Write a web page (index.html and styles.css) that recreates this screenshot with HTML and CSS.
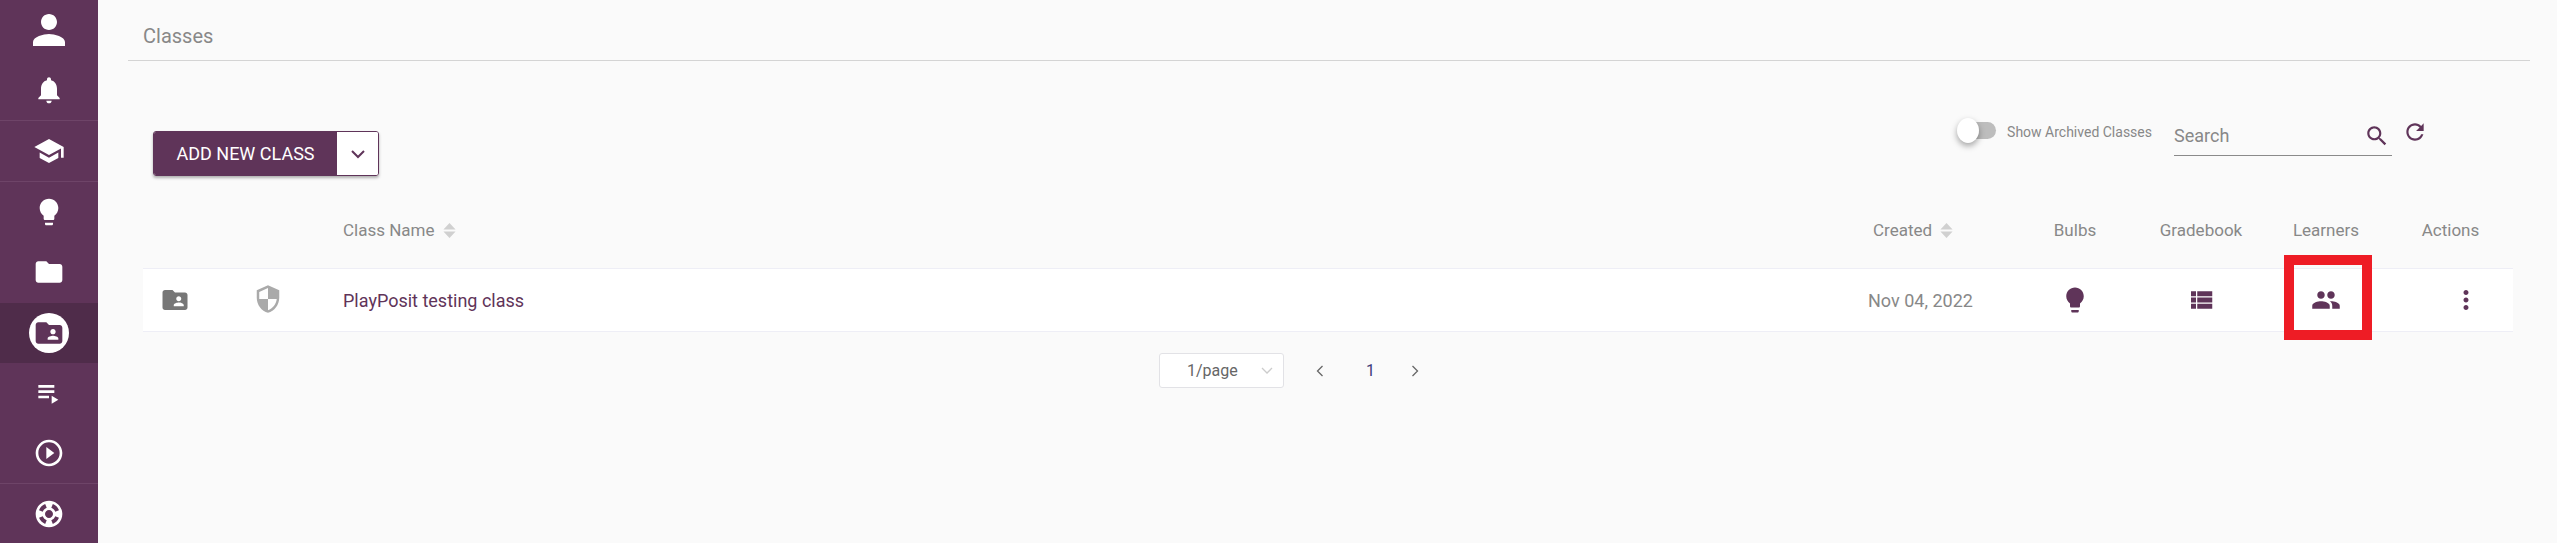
FILE: index.html
```html
<!DOCTYPE html>
<html>
	<head>
		<meta charset="utf-8" />
		<meta name="viewport" content="width=device-width, initial-scale=1.0" />
		<title>Classes</title>
		<link rel="stylesheet" href="styles.css">
	</head>
	<body class="app">
		<nav class="sidebar">
			<a class="side-item"><svg class="side-icon person-icon" viewBox="0 0 24 24"><path d="M12 12c2.21 0 4-1.79 4-4s-1.79-4-4-4-4 1.79-4 4 1.79 4 4 4zm0 2c-2.67 0-8 1.34-8 4v2h16v-2c0-2.66-5.33-4-8-4z"/></svg></a>
			<a class="side-item side-line"><svg class="side-icon" viewBox="0 0 24 24"><path d="M12 22c1.1 0 2-.9 2-2h-4c0 1.1.89 2 2 2zm6-6v-5c0-3.07-1.64-5.64-4.5-6.32V4c0-.83-.67-1.5-1.5-1.5s-1.5.67-1.5 1.5v.68C7.63 5.36 6 7.92 6 11v5l-2 2v1h16v-1l-2-2z"/></svg></a>
			<a class="side-item side-line"><svg class="side-icon" viewBox="0 0 24 24"><path d="M5 13.18v4L12 21l7-3.82v-4L12 17l-7-3.82zM12 3L1 9l11 6 9-4.91V17h2V9L12 3z"/></svg></a>
			<a class="side-item"><svg class="side-icon" viewBox="0 0 24 24"><path d="M9 21c0 .55.45 1 1 1h4c.55 0 1-.45 1-1v-1H9v1zm3-19C8.14 2 5 5.14 5 9c0 2.38 1.19 4.47 3 5.74V17c0 .55.45 1 1 1h6c.55 0 1-.45 1-1v-2.26c1.81-1.27 3-3.36 3-5.74 0-3.86-3.14-7-7-7z"/></svg></a>
			<a class="side-item"><svg class="side-icon" viewBox="0 0 24 24"><path d="M10 4H4c-1.1 0-1.99.9-1.99 2L2 18c0 1.1.9 2 2 2h16c1.1 0 2-.9 2-2V8c0-1.1-.9-2-2-2h-8l-2-2z"/></svg></a>
			<a class="side-item side-active"><span class="side-circle"><svg class="side-icon" viewBox="0 0 24 24"><path d="M20 6h-8l-2-2H4c-1.1 0-1.99.9-1.99 2L2 18c0 1.1.9 2 2 2h16c1.1 0 2-.9 2-2V8c0-1.1-.9-2-2-2zm-5 3c1.1 0 2 .9 2 2s-.9 2-2 2-2-.9-2-2 .9-2 2-2zm4 8h-8v-1c0-1.33 2.67-2 4-2s4 .67 4 2v1z"/></svg></span></a>
			<a class="side-item"><svg class="side-icon" viewBox="0 0 24 24"><path d="M4 10h12v2H4zm0-4h12v2H4zm0 8h8v2H4zm10 0v6l5-3z"/></svg></a>
			<a class="side-item side-line"><svg class="side-icon" viewBox="0 0 24 24"><path d="M10 16.5l6-4.5-6-4.5v9zM12 2C6.48 2 2 6.48 2 12s4.48 10 10 10 10-4.48 10-10S17.52 2 12 2zm0 18c-4.41 0-8-3.59-8-8s3.59-8 8-8 8 3.59 8 8-3.59 8-8 8z"/></svg></a>
			<a class="side-item"><svg class="side-icon" viewBox="0 0 24 24"><path d="M12 2C6.48 2 2 6.48 2 12s4.48 10 10 10 10-4.48 10-10S17.52 2 12 2zm7.46 7.12l-2.78 1.15c-.51-1.36-1.58-2.44-2.95-2.94l1.15-2.78c2.1.8 3.77 2.47 4.58 4.57zM12 15c-1.66 0-3-1.34-3-3s1.34-3 3-3 3 1.34 3 3-1.34 3-3 3zM9.13 4.54l1.17 2.78c-1.38.5-2.47 1.59-2.98 2.97L4.54 9.13c.81-2.11 2.48-3.78 4.59-4.59zM4.54 14.87l2.78-1.15c.51 1.38 1.59 2.46 2.97 2.96l-1.17 2.78c-2.1-.81-3.77-2.48-4.58-4.59zm10.34 4.59l-1.15-2.78c1.37-.51 2.45-1.59 2.95-2.97l2.78 1.17c-.81 2.1-2.48 3.77-4.58 4.58z"/></svg></a>
		</nav>
		<main class="content">
			<header class="page-title">Classes</header>

			<section class="toolbar">
				<div class="split-btn">
					<button type="button" class="split-main">ADD NEW CLASS</button>
					<button type="button" class="split-drop"><svg class="chev" viewBox="0 0 16 10"><path d="M2 2l6 6 6-6"/></svg></button>
				</div>
				<div class="tools">
					<div class="toggle"><span class="toggle-track"></span><span class="toggle-knob"></span></div>
					<span class="toggle-label">Show Archived Classes</span>
					<div class="search">
						<span class="search-text">Search</span>
						<svg class="search-icon" viewBox="0 0 24 24"><path d="M15.5 14h-.79l-.28-.27C15.41 12.59 16 11.11 16 9.5 16 5.91 13.09 3 9.5 3S3 5.91 3 9.5 5.91 16 9.5 16c1.61 0 3.09-.59 4.23-1.57l.27.28v.79l5 4.99L20.49 19l-4.99-5zm-6 0C7.01 14 5 11.99 5 9.5S7.01 5 9.5 5 14 7.01 14 9.5 11.99 14 9.5 14z"/></svg>
					</div>
					<svg class="refresh-icon" viewBox="0 0 24 24"><path d="M17.65 6.35C16.2 4.9 14.21 4 12 4c-4.42 0-7.99 3.58-7.99 8s3.57 8 7.99 8c3.73 0 6.84-2.55 7.73-6h-2.08c-.82 2.33-3.04 4-5.65 4-3.31 0-6-2.69-6-6s2.69-6 6-6c1.66 0 3.14.69 4.22 1.78L13 11h7V4l-2.35 2.35z"/></svg>
				</div>
			</section>

			<section class="table">
				<div class="table-row table-head">
					<span></span>
					<span></span>
					<span class="cell-name">Class Name <svg class="sort" viewBox="0 0 13 16"><path d="M6.500 0L13 7H0zM0 9h13l-6.500 7z"/></svg></span>
					<span class="cell-created-head">Created <svg class="sort" viewBox="0 0 13 16"><path d="M6.500 0L13 7H0zM0 9h13l-6.500 7z"/></svg></span>
					<span class="cell-mid">Bulbs</span>
					<span class="cell-mid">Gradebook</span>
					<span class="cell-mid">Learners</span>
					<span class="cell-mid">Actions</span>
				</div>
				<div class="table-row table-body">
					<span class="cell-mid"><svg class="row-icon folder-icon" viewBox="0 0 24 24"><path d="M20 6h-8l-2-2H4c-1.1 0-1.99.9-1.99 2L2 18c0 1.1.9 2 2 2h16c1.1 0 2-.9 2-2V8c0-1.1-.9-2-2-2zm-5 3c1.1 0 2 .9 2 2s-.9 2-2 2-2-.9-2-2 .9-2 2-2zm4 8h-8v-1c0-1.33 2.67-2 4-2s4 .67 4 2v1z"/></svg></span>
					<span class="cell-mid"><svg class="row-icon shield-icon" viewBox="0 0 24 24"><path d="M12 1L3 5v6c0 5.55 3.84 10.74 9 12 5.16-1.26 9-6.45 9-12V5l-9-4zm0 10.990h7c-.53 4.120-3.280 7.790-7 8.940V12H5V6.300l7-3.110v8.800z"/></svg></span>
					<span class="cell-name class-link">PlayPosit testing class</span>
					<span class="cell-created">Nov 04, 2022</span>
					<span class="cell-mid"><svg class="row-icon" viewBox="0 0 24 24"><path d="M9 21c0 .55.45 1 1 1h4c.55 0 1-.45 1-1v-1H9v1zm3-19C8.14 2 5 5.14 5 9c0 2.38 1.19 4.47 3 5.74V17c0 .55.45 1 1 1h6c.55 0 1-.45 1-1v-2.26c1.81-1.27 3-3.36 3-5.74 0-3.86-3.14-7-7-7z"/></svg></span>
					<span class="cell-mid"><svg class="row-icon" viewBox="0 0 24 24"><path d="M4 14h4v-4H4v4zm0 5h4v-4H4v4zM4 9h4V5H4v4zm5 5h12v-4H9v4zm0 5h12v-4H9v4zM9 5v4h12V5H9z"/></svg></span>
					<span class="cell-mid cell-learners">
						<svg class="row-icon" viewBox="0 0 24 24"><path d="M16 11c1.66 0 2.99-1.34 2.99-3S17.66 5 16 5c-1.660 0-3 1.340-3 3s1.340 3 3 3zm-8 0c1.660 0 2.990-1.340 2.990-3S9.660 5 8 5C6.340 5 5 6.340 5 8s1.340 3 3 3zm0 2c-2.330 0-7 1.170-7 3.500V19h14v-2.500c0-2.330-4.670-3.500-7-3.500zm8 0c-.29 0-.62.02-.97.05 1.160.84 1.970 1.970 1.970 3.450V19h6v-2.500c0-2.330-4.670-3.500-7-3.500z"/></svg>
						<span class="red-box"></span>
					</span>
					<span class="cell-mid cell-actions"><svg class="row-icon" viewBox="0 0 24 24"><path d="M12 8c1.100 0 2-.9 2-2s-.9-2-2-2-2 .9-2 2 .9 2 2 2zm0 2c-1.100 0-2 .9-2 2s.9 2 2 2 2-.9 2-2-.9-2-2-2zm0 6c-1.100 0-2 .9-2 2s.9 2 2 2 2-.9 2-2-.9-2-2-2z"/></svg></span>
				</div>
			</section>

			<section class="pager">
				<div class="page-select">
					<span>1/page</span>
					<svg class="page-select-arrow" viewBox="0 0 12 8"><path d="M1 1l5 5 5-5"/></svg>
				</div>
				<svg class="page-arrow" viewBox="0 0 8 12"><path d="M6.500 1l-5 5 5 5"/></svg>
				<span class="page-num">1</span>
				<svg class="page-arrow" viewBox="0 0 8 12"><path d="M1.500 1l5 5-5 5"/></svg>
			</section>
		</main>
	</body>
</html>
```

FILE: styles.css
```css
:root {
	--plum: #5f3459;
	--grey-text: #888;
}

body {
	margin: 0;
	padding: 0;
	overflow: hidden;
	width: 100vw;
	height: 100vh;
	font-family: Roboto, "Liberation Sans", Arial, sans-serif;
	background-color: #fafafa;
	color: var(--grey-text);
}

.app {
	display: flex;
	flex-direction: row;
}

/* left rail */
.sidebar {
	flex: 0 0 98px;
	display: flex;
	flex-direction: column;
	background-color: var(--plum);
	height: 100%;
	overflow: hidden;
}

.side-item {
	flex: 0 0 60.500px;
	display: flex;
	align-items: center;
	justify-content: center;
	box-sizing: border-box;
}

.side-line {
	border-bottom: 1px solid #6e4468;
}

.side-active {
	background-color: #4f2c4a;
}

.side-icon {
	width: 32px;
	height: 32px;
	fill: #fff;
}

.person-icon {
	width: 48px;
	height: 48px;
}

.side-circle {
	display: flex;
	align-items: center;
	justify-content: center;
	width: 40px;
	height: 40px;
	border-radius: 50%;
	background-color: #fff;
}

.side-circle .side-icon {
	fill: var(--plum);
}

/* main column */
.content {
	flex: 1;
	min-width: 0;
	padding: 0 27px 0 30px;
}

.page-title {
	height: 61px;
	box-sizing: border-box;
	padding: 24px 0 0 15px;
	font-size: 20px;
	line-height: 24px;
	border-bottom: 1px solid #d4d4d4;
}

.toolbar {
	display: flex;
	justify-content: space-between;
	align-items: flex-start;
	height: 146px;
	box-sizing: border-box;
	padding: 70px 0 0 25px;
}

.split-btn {
	display: flex;
	width: 226px;
	height: 45px;
	box-sizing: border-box;
	border: 1px solid var(--plum);
	border-radius: 3px;
	box-shadow: 0 2px 3px rgba(0, 0, 0, 0.3);
	overflow: hidden;
}

.split-btn button {
	border: none;
	padding: 0;
	cursor: pointer;
}

.split-main {
	flex: 1;
	background-color: var(--plum);
	color: #fff;
	font-family: inherit;
	font-size: 18px;
}

.split-drop {
	flex: 0 0 41px;
	background-color: #fff;
	display: flex;
	align-items: center;
	justify-content: center;
}

.chev {
	width: 16px;
	height: 10px;
	fill: none;
	stroke: var(--plum);
	stroke-width: 2;
}

.tools {
	display: flex;
	align-items: flex-start;
	margin-right: 102px;
	margin-top: -15px;
}

.toggle {
	position: relative;
	width: 39px;
	height: 25px;
	margin-top: 2px;
}

.toggle-track {
	position: absolute;
	left: 6px;
	top: 4px;
	width: 33px;
	height: 17px;
	border-radius: 9px;
	background-color: #bdbdbd;
}

.toggle-knob {
	position: absolute;
	left: 0;
	top: 0;
	width: 22px;
	height: 25px;
	border-radius: 50%;
	background-color: #fff;
	box-shadow: 0 3px 6px rgba(0, 0, 0, 0.35);
}

.toggle-label {
	margin: 6px 0 0 11px;
	font-size: 14px;
	line-height: 20px;
	white-space: nowrap;
}

.search {
	display: flex;
	align-items: center;
	justify-content: space-between;
	width: 218px;
	height: 40px;
	box-sizing: border-box;
	margin-left: 22px;
	border-bottom: 1px solid #8a8a8a;
	font-size: 18px;
}

.search-icon {
	width: 26px;
	height: 26px;
	fill: var(--plum);
	margin-right: 2px;
}

.refresh-icon {
	width: 26px;
	height: 26px;
	fill: var(--plum);
	margin: 3px 0 0 10px;
}

/* class table */
.table {
	margin-left: 15px;
	width: 2370px;
}

.table-row {
	display: grid;
	grid-template-columns: 64px 122px 1525px 158px 126px 126px 124px 125px;
	align-items: center;
}

.table-head {
	height: 61px;
	padding-bottom: 15px;
	box-sizing: border-box;
	font-size: 17px;
}

.table-body {
	height: 64px;
	box-sizing: border-box;
	background-color: #fff;
	border-top: 1px solid #eeeef6;
	border-bottom: 1px solid #eeeef6;
	font-size: 18px;
}

.cell-name {
	padding-left: 14px;
	display: flex;
	align-items: center;
	gap: 8px;
}

.cell-created-head {
	padding-left: 19px;
	display: flex;
	align-items: center;
	gap: 8px;
}

.cell-created {
	padding-left: 14px;
}

.cell-mid {
	display: flex;
	justify-content: center;
	align-items: center;
}

.class-link {
	color: var(--plum);
}

.sort {
	width: 13px;
	height: 15px;
	fill: #d0d0d0;
}

.row-icon {
	width: 30px;
	height: 30px;
	fill: var(--plum);
}

.folder-icon {
	fill: #777;
}

.shield-icon {
	fill: #aaa;
	margin-top: -3px;
}

.cell-learners {
	position: relative;
	height: 100%;
}

.cell-actions {
	padding-left: 30px;
}

/* annotation drawn over the row */
.red-box {
	position: absolute;
	left: 20px;
	top: -14px;
	width: 88px;
	height: 85px;
	box-sizing: border-box;
	border: 10px solid #ee1c25;
}

.pager {
	display: flex;
	align-items: center;
	margin: 21px 0 0 1031px;
	font-size: 16px;
}

.page-select {
	display: flex;
	align-items: center;
	justify-content: space-between;
	width: 125px;
	height: 35px;
	box-sizing: border-box;
	padding: 0 10px 0 27px;
	background-color: #fff;
	border: 1px solid #e2e2e6;
	border-radius: 3px;
	color: #666;
}

.page-select-arrow {
	width: 12px;
	height: 8px;
	fill: none;
	stroke: #ccc;
	stroke-width: 1.300;
}

.page-arrow {
	width: 8px;
	height: 12px;
	fill: none;
	stroke: #666;
	stroke-width: 1.300;
	margin-left: 32px;
}

.page-num {
	margin-left: 42px;
	margin-right: 4px;
	color: #3d3d7a;
}
```
